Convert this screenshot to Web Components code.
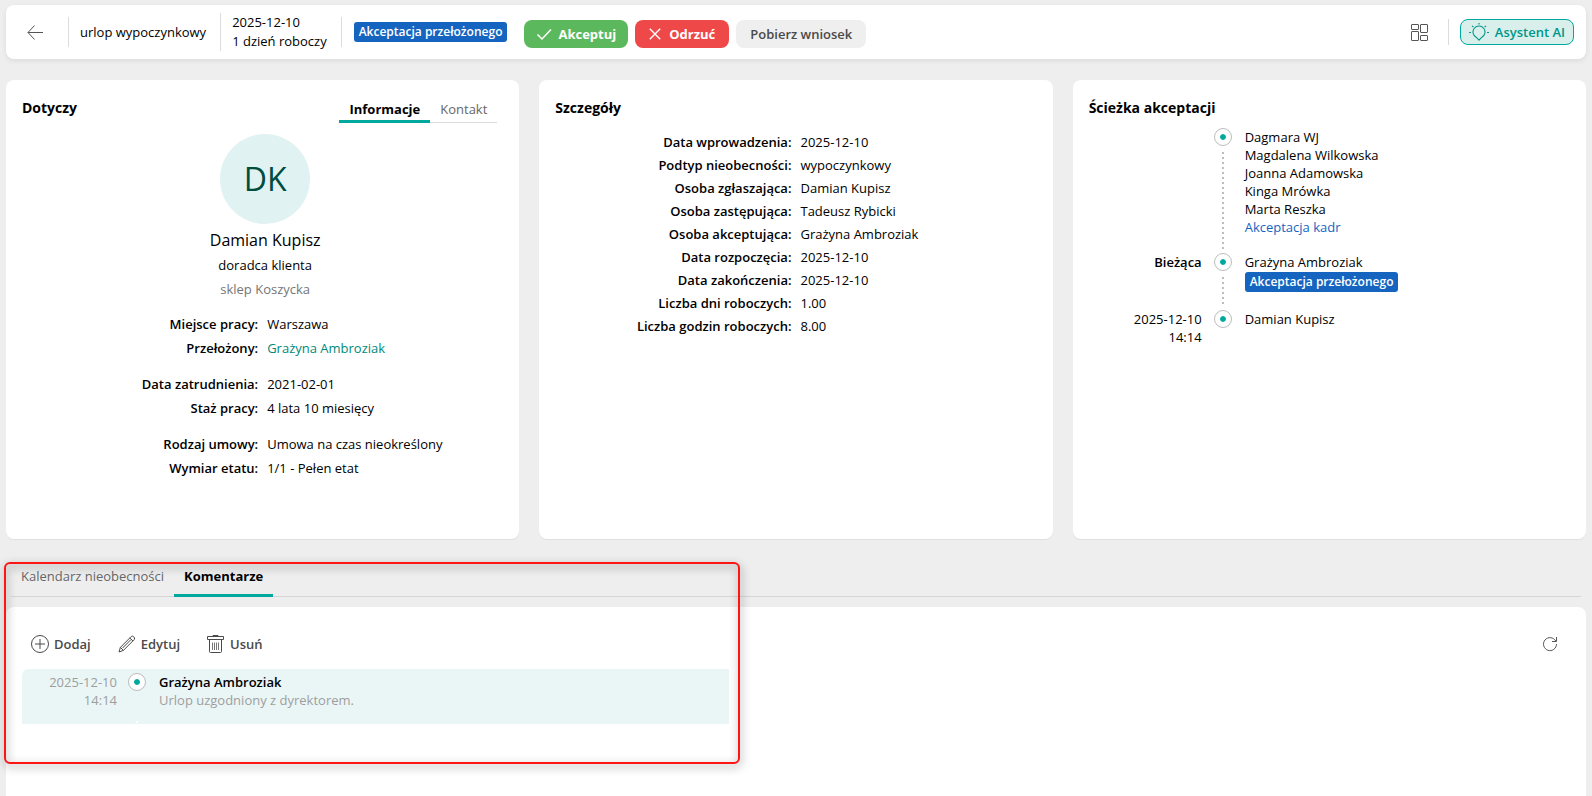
<!DOCTYPE html>
<html lang="pl">
<head>
<meta charset="UTF-8">
<meta name="viewport" content="width=device-width, initial-scale=1.0">
<title>Wniosek urlopowy</title>
<style>
    html {
        --teal: #00a99d;
        --teal-dark: #00897b;
        --blue: #1565c0;
        --muted: #757575;
        --line: #dcdcdc;
    }

    body {
        margin: 0;
        background: #eeeeee;
        color: #000000;
        font: 13px/18px 'Open Sans', 'Noto Sans', sans-serif;
    }
</style>
</head>
<body>
<absence-page></absence-page>

<script>
const icons = {
    back: `<svg width="16" height="16" viewBox="0 0 16 16"><path d="M7.5 1.5 1 8.5l6.5 7M1 8.5h15"/></svg>`,
    check: `<svg width="16" height="16" viewBox="0 0 16 16"><path stroke-width="1.5" d="M1.5 8.5 6 13l9-9.5"/></svg>`,
    cross: `<svg width="12" height="12" viewBox="0 0 12 12"><path stroke-width="1.4" d="M.8.8l10.4 10.4M11.2.8L.8 11.2"/></svg>`,
    grid: `<svg width="17" height="17" viewBox="0 0 17 17"><rect x=".5" y=".5" width="7" height="5" rx=".5"/><rect x=".5" y="7.5" width="7" height="9" rx=".5"/><rect x="9.5" y=".5" width="7" height="8" rx=".5"/><rect x="9.5" y="11.5" width="7" height="5" rx=".5"/></svg>`,
    bulb: `<svg width="20" height="18" viewBox="0 0 20 18"><path d="M10 17.2 7.4 14.4A6 6 0 1 1 12.6 14.4z" stroke-width="1.1"/><path d="M10 0v1.6M3 2.8l1.4 1.4M17 2.8l-1.4 1.4M0 9.5h2M18 9.5h2" stroke-width="1.2"/></svg>`,
    plus: `<svg width="18" height="18" viewBox="0 0 18 18"><circle cx="9" cy="9" r="8.5"/><path d="M9 4v10M4 9h10"/></svg>`,
    pencil: `<svg width="18" height="18" viewBox="0 0 18 18"><path d="M1 17l1.4-4.6L13.2 1.5q1-1 2.4.2t.9 2.6L5.4 15.4zM2.4 12.4l3 3M11.8 3l3.2 3M4.6 13 12.8 4.7"/></svg>`,
    trash: `<svg width="18" height="18" viewBox="0 0 18 18"><path d="M6 1.5V.5h5v1M.5 1.5h16v3H.5zM2.5 4.5v12q0 1 1 1h10q1 0 1-1v-12"/><path stroke-opacity=".75" d="M5.5 7.5V15M7.5 7.5V15M9.5 7.5V15M11.5 7.5V15"/></svg>`,
    refresh: `<svg width="16" height="16" viewBox="0 0 16 16"><path d="M13.7 5A6.5 6.5 0 1 0 14.5 8M14.5 1v4.5H10"/></svg>`
};

const iconStyle = `
    svg {
        display: block;
        flex: none;
        fill: none;
        stroke: currentColor;
        stroke-width: 1;
    }
`;

class StatusBadge extends HTMLElement {
    constructor() {
        super();
        this.attachShadow({ mode: 'open' });
    }

    connectedCallback() {
        this.shadowRoot.innerHTML = `<style>
            :host {
                display: inline-block;
                padding: 0 5px;
                border-radius: 3px;
                background: var(--blue);
                color: #ffffff;
                font-size: 12px;
                font-weight: 600;
                line-height: 20px;
                white-space: nowrap;
            }
        </style>
        <slot></slot>`;
    }
}
customElements.define('status-badge', StatusBadge);

class ActionButton extends HTMLElement {
    constructor() {
        super();
        this.attachShadow({ mode: 'open' });
    }

    connectedCallback() {
        const icon = icons[this.getAttribute('icon')] || '';
        this.shadowRoot.innerHTML = `<style>
            ${iconStyle}

            :host {
                display: inline-block;
            }

            button {
                display: flex;
                align-items: center;
                gap: 6px;
                height: 28px;
                padding: 0 14px;
                border: 0;
                border-radius: 8px;
                background: #efefef;
                color: #4a4a4a;
                font: inherit;
                font-weight: 600;
                white-space: nowrap;
                cursor: pointer;
            }

            :host([kind="accept"]) button {
                background: #5cb85c;
                color: #ffffff;
                font-weight: 700;
                padding: 0 12px;
            }

            :host([kind="reject"]) button {
                background: #ef4848;
                color: #ffffff;
                font-weight: 700;
                padding: 0 14px;
                gap: 8px;
            }

            :host([kind="assistant"]) button {
                height: 26px;
                padding: 0 8px;
                border: 1px solid var(--teal);
                background: #d9efec;
                color: #009688;
            }

            :host([kind="tool"]) button {
                padding: 0;
                gap: 5px;
                background: none;
            }

            :host([kind="icon"]) button {
                padding: 0;
                background: none;
                color: #555555;
            }
        </style>
        <button type="button" aria-label="${this.getAttribute('label') || this.textContent}">${icon}<slot></slot></button>`;
    }
}
customElements.define('action-button', ActionButton);

class TopBar extends HTMLElement {
    constructor() {
        super();
        this.attachShadow({ mode: 'open' });
    }

    connectedCallback() {
        this.shadowRoot.innerHTML = `<style>
            :host {
                display: flex;
                align-items: center;
                min-height: 54px;
                box-sizing: border-box;
                padding: 0 12px 0 21px;
                border-radius: 8px;
                background: #ffffff;
                box-shadow: 0 2px 5px rgba(0, 0, 0, 0.08);
            }

            .cell {
                display: flex;
                align-items: center;
                min-height: 30px;
                padding: 0 14px 0 11px;
                border-left: 1px solid var(--line);
                line-height: 19px;
            }

            .cell.state {
                padding: 0 0 0 12px;
            }

            .back {
                margin-right: 25px;
            }

            .actions {
                display: flex;
                gap: 7px;
                padding: 4px 0 0 17px;
            }

            .right {
                display: flex;
                align-items: center;
                gap: 20px;
                margin-left: auto;
            }

            .right .cell {
                min-height: 26px;
                padding: 0 0 0 11px;
            }
        </style>
        <action-button class="back" kind="icon" icon="back" label="Wstecz"></action-button>
        <div class="cell">urlop wypoczynkowy</div>
        <div class="cell">2025-12-10<br>1 dzień roboczy</div>
        <div class="cell state"><status-badge>Akceptacja przełożonego</status-badge></div>
        <div class="actions">
            <action-button kind="accept" icon="check">Akceptuj</action-button>
            <action-button kind="reject" icon="cross">Odrzuć</action-button>
            <action-button>Pobierz wniosek</action-button>
        </div>
        <div class="right">
            <action-button kind="icon" icon="grid" label="Układ"></action-button>
            <div class="cell"><action-button kind="assistant" icon="bulb">Asystent AI</action-button></div>
        </div>`;
    }
}
customElements.define('top-bar', TopBar);

class PanelCard extends HTMLElement {
    constructor() {
        super();
        this.attachShadow({ mode: 'open' });
    }

    connectedCallback() {
        this.shadowRoot.innerHTML = `<style>
            :host {
                display: block;
                box-sizing: border-box;
                padding: 16px 0;
                border-radius: 8px;
                background: #ffffff;
                box-shadow: 0 1px 0 #e0e0e0;
            }

            header {
                display: flex;
                justify-content: space-between;
                height: 28px;
                padding: 0 22px 0 16px;
            }

            h2 {
                margin: 0;
                font-size: 14px;
                font-weight: 700;
                line-height: 24px;
            }
        </style>
        <header>
            <h2>${this.getAttribute('heading')}</h2>
            <slot name="tools"></slot>
        </header>
        <slot></slot>`;
    }
}
customElements.define('panel-card', PanelCard);

class TabBar extends HTMLElement {
    constructor() {
        super();
        this.attachShadow({ mode: 'open' });
    }

    connectedCallback() {
        const active = this.getAttribute('active');
        const tabs = this.getAttribute('tabs').split('|').map(name => `
            <button type="button" role="tab" aria-selected="${name === active}">${name}</button>`).join('');
        this.shadowRoot.innerHTML = `<style>
            :host {
                display: block;
            }

            div {
                display: flex;
                height: 27px;
                box-shadow: inset 0 -1px 0 var(--line);
            }

            :host([size="large"]) div {
                height: 37px;
                box-shadow: inset 0 -1px 0 #d6d6d6;
            }

            button {
                padding: 2px 10px 0;
                border: 0;
                border-bottom: 3px solid transparent;
                background: none;
                color: #666666;
                font: inherit;
                cursor: pointer;
            }

            :host([size="large"]) button {
                padding: 0 10px 3px;
            }

            button[aria-selected="true"] {
                border-bottom-color: var(--teal);
                color: #000000;
                font-weight: 700;
            }
        </style>
        <div role="tablist">${tabs}</div>`;
    }
}
customElements.define('tab-bar', TabBar);

class FieldRow extends HTMLElement {
    constructor() {
        super();
        this.attachShadow({ mode: 'open' });
    }

    connectedCallback() {
        this.shadowRoot.innerHTML = `<style>
            :host {
                display: grid;
                grid-template-columns: 1fr 1fr;
                gap: 9px;
                line-height: var(--row, 23px);
            }

            b {
                font-weight: 600;
                text-align: right;
            }

            ::slotted(a) {
                color: var(--teal-dark);
                text-decoration: none;
            }
        </style>
        <b>${this.getAttribute('label')}:</b><span><slot></slot></span>`;
    }
}
customElements.define('field-row', FieldRow);

class PersonProfile extends HTMLElement {
    constructor() {
        super();
        this.attachShadow({ mode: 'open' });
    }

    connectedCallback() {
        this.shadowRoot.innerHTML = `<style>
            :host {
                display: flex;
                flex-direction: column;
                align-items: center;
                padding: 10px 0 11px 5px;
                line-height: 24px;
            }

            .avatar {
                width: 90px;
                height: 90px;
                border-radius: 50%;
                background: #e0f2f1;
                color: #004d40;
                font-size: 32px;
                line-height: 90px;
                text-align: center;
            }

            .name {
                margin: 4px 0 1px;
                font-size: 16px;
            }

            .unit {
                color: var(--muted);
            }
        </style>
        <div class="avatar">${this.getAttribute('initials')}</div>
        <div class="name">${this.getAttribute('name')}</div>
        <div>${this.getAttribute('position')}</div>
        <div class="unit">${this.getAttribute('unit')}</div>`;
    }
}
customElements.define('person-profile', PersonProfile);

class TimelineStep extends HTMLElement {
    constructor() {
        super();
        this.attachShadow({ mode: 'open' });
    }

    connectedCallback() {
        this.shadowRoot.innerHTML = `<style>
            :host {
                display: grid;
                grid-template-columns: 141px 18px 1fr;
            }

            .when {
                padding-right: 12px;
                text-align: right;
            }

            .rail {
                display: flex;
                flex-direction: column;
                align-items: center;
            }

            .dot {
                width: 6px;
                height: 6px;
                margin-top: 1px;
                border: 5px solid #ffffff;
                border-radius: 50%;
                background: var(--teal) padding-box;
                outline: 1px solid #bdbdbd;
            }

            .line {
                flex: 1;
                width: 2px;
                margin: 7px 0 4px;
                background: repeating-linear-gradient(#bdbdbd 0 2px, transparent 2px 5px);
            }

            :host([last]) .line {
                display: none;
            }

            .who {
                padding: 0 0 17px 13px;
            }
        </style>
        <div class="when"><slot name="when"></slot></div>
        <div class="rail"><div class="dot"></div><div class="line"></div></div>
        <div class="who"><slot></slot></div>`;
    }
}
customElements.define('timeline-step', TimelineStep);

class CommentsSection extends HTMLElement {
    constructor() {
        super();
        this.attachShadow({ mode: 'open' });
    }

    connectedCallback() {
        this.shadowRoot.innerHTML = `<style>
            :host {
                display: flex;
                flex-direction: column;
                position: relative;
            }

            tab-bar {
                margin: 0 5px 10px;
            }

            .panel {
                flex: 1;
                padding: 23px 16px;
                border-radius: 8px 8px 0 0;
                background: #ffffff;
            }

            .toolbar {
                display: flex;
                gap: 27px;
                padding: 0 12px 0 9px;
            }

            .toolbar .refresh {
                margin-left: auto;
            }

            .comment {
                display: grid;
                grid-template-columns: 95px 40px 1fr;
                width: 45.7%;
                min-height: 55px;
                box-sizing: border-box;
                margin-top: 11px;
                padding-top: 4px;
                border-radius: 6px 0 0 0;
                background: #eaf6f6;
                color: #9e9e9e;
            }

            time {
                text-align: right;
            }

            .rail {
                display: flex;
                flex-direction: column;
                align-items: center;
                justify-content: space-between;
            }

            .dot {
                width: 6px;
                height: 6px;
                margin-top: 1px;
                border: 5px solid #ffffff;
                border-radius: 50%;
                background: var(--teal) padding-box;
                outline: 1px solid #bdbdbd;
            }

            .tail {
                width: 2px;
                height: 2px;
                margin-bottom: 1px;
                background: #ffffff;
            }

            .text {
                padding-left: 2px;
            }

            .text b {
                display: block;
                color: #000000;
                font-weight: 600;
            }

            .frame {
                position: absolute;
                top: 2px;
                left: -2px;
                width: 46.6%;
                height: 202px;
                box-sizing: border-box;
                border: 2px solid #fb1515;
                border-radius: 6px;
                filter: drop-shadow(1px 3px 4px rgba(0, 0, 0, 0.5));
                pointer-events: none;
            }
        </style>
        <tab-bar size="large" tabs="Kalendarz nieobecności|Komentarze" active="Komentarze"></tab-bar>
        <div class="panel">
            <div class="toolbar">
                <action-button kind="tool" icon="plus">Dodaj</action-button>
                <action-button kind="tool" icon="pencil">Edytuj</action-button>
                <action-button kind="tool" icon="trash">Usuń</action-button>
                <action-button class="refresh" kind="icon" icon="refresh" label="Odśwież"></action-button>
            </div>
            <article class="comment">
                <time datetime="2025-12-10T14:14">2025-12-10<br>14:14</time>
                <div class="rail"><div class="dot"></div><div class="tail"></div></div>
                <div class="text"><b>Grażyna Ambroziak</b>Urlop uzgodniony z dyrektorem.</div>
            </article>
        </div>
        <div class="frame"></div>`;
    }
}
customElements.define('comments-section', CommentsSection);

class AbsencePage extends HTMLElement {
    constructor() {
        super();
        this.attachShadow({ mode: 'open' });
    }

    connectedCallback() {
        this.shadowRoot.innerHTML = `<style>
            :host {
                display: flex;
                flex-direction: column;
                min-height: 100vh;
                box-sizing: border-box;
                padding: 5px 6px 0;
            }

            main {
                display: grid;
                grid-template-columns: repeat(3, 1fr);
                gap: 20px;
                min-height: 459px;
                margin: 21px 0;
            }

            .person {
                --row: 24px;
            }

            .group {
                margin-bottom: 12px;
            }

            .details {
                padding-top: 7px;
            }

            .path {
                padding-top: 4px;
            }

            .path a {
                color: var(--blue);
                text-decoration: none;
            }

            .path b {
                font-weight: 600;
            }

            .path status-badge {
                display: block;
                width: fit-content;
                margin: 1px 0;
            }

            comments-section {
                flex: 1;
            }
        </style>
        <top-bar></top-bar>
        <main>
            <panel-card class="person" heading="Dotyczy">
                <tab-bar slot="tools" tabs="Informacje|Kontakt" active="Informacje"></tab-bar>
                <person-profile initials="DK" name="Damian Kupisz" position="doradca klienta" unit="sklep Koszycka"></person-profile>
                <div class="group">
                    <field-row label="Miejsce pracy">Warszawa</field-row>
                    <field-row label="Przełożony"><a href="#">Grażyna Ambroziak</a></field-row>
                </div>
                <div class="group">
                    <field-row label="Data zatrudnienia">2021-02-01</field-row>
                    <field-row label="Staż pracy">4 lata 10 miesięcy</field-row>
                </div>
                <div class="group">
                    <field-row label="Rodzaj umowy">Umowa na czas nieokreślony</field-row>
                    <field-row label="Wymiar etatu">1/1 - Pełen etat</field-row>
                </div>
            </panel-card>

            <panel-card heading="Szczegóły">
                <div class="details">
                    <field-row label="Data wprowadzenia">2025-12-10</field-row>
                    <field-row label="Podtyp nieobecności">wypoczynkowy</field-row>
                    <field-row label="Osoba zgłaszająca">Damian Kupisz</field-row>
                    <field-row label="Osoba zastępująca">Tadeusz Rybicki</field-row>
                    <field-row label="Osoba akceptująca">Grażyna Ambroziak</field-row>
                    <field-row label="Data rozpoczęcia">2025-12-10</field-row>
                    <field-row label="Data zakończenia">2025-12-10</field-row>
                    <field-row label="Liczba dni roboczych">1.00</field-row>
                    <field-row label="Liczba godzin roboczych">8.00</field-row>
                </div>
            </panel-card>

            <panel-card heading="Ścieżka akceptacji">
                <div class="path">
                    <timeline-step>
                        Dagmara WJ<br>Magdalena Wilkowska<br>Joanna Adamowska<br>Kinga Mrówka<br>Marta Reszka<br>
                        <a href="#">Akceptacja kadr</a>
                    </timeline-step>
                    <timeline-step>
                        <b slot="when">Bieżąca</b>
                        Grażyna Ambroziak
                        <status-badge>Akceptacja przełożonego</status-badge>
                    </timeline-step>
                    <timeline-step last>
                        <span slot="when">2025-12-10<br>14:14</span>
                        Damian Kupisz
                    </timeline-step>
                </div>
            </panel-card>
        </main>
        <comments-section></comments-section>`;
    }
}
customElements.define('absence-page', AbsencePage);
</script>
</body>
</html>
